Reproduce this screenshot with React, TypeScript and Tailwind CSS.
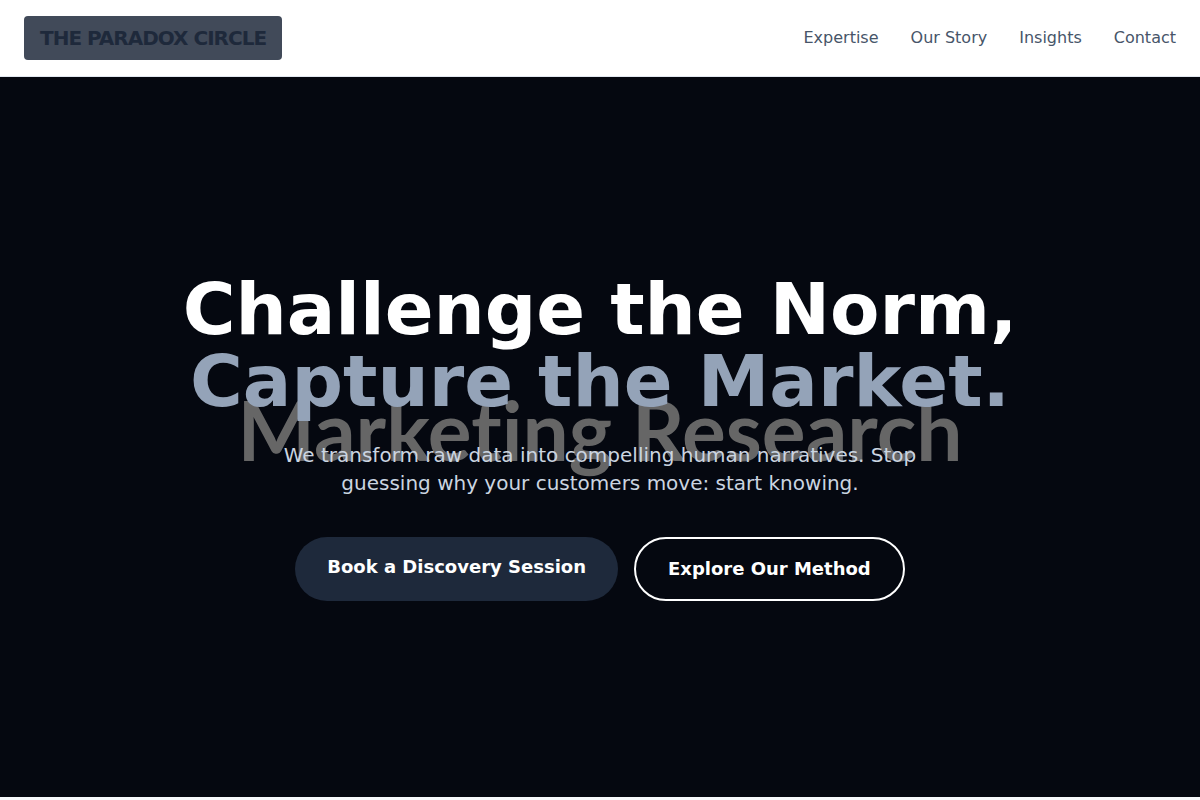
const links = [
  { label: "Expertise", href: "#expertise" },
  { label: "Our Story", href: "#story" },
  { label: "Insights", href: "#insights" },
  { label: "Contact", href: "#contact" },
];

function Header() {
  return (
    <header className="border-b border-slate-200 bg-white">
      <div className="flex items-center justify-between px-6 py-4">
        <a
          href="#home"
          className="rounded bg-[#414a59] px-4 py-2 text-xl font-bold tracking-tighter text-[#1e293b]"
        >
          THE PARADOX CIRCLE
        </a>
        <nav className="flex gap-8 text-base text-[#475569]">
          {links.map((link) => (
            <a key={link.href} href={link.href}>
              {link.label}
            </a>
          ))}
        </nav>
      </div>
    </header>
  );
}

function Hero() {
  return (
    <section
      id="home"
      className="relative flex min-h-[90vh] items-center justify-center overflow-hidden bg-[#050810] px-6"
    >
      <div
        aria-hidden="true"
        className="absolute inset-0 flex items-center justify-center pb-4 font-['Lato',sans-serif] text-[82px] leading-none font-bold whitespace-nowrap text-[#666666] [font-variant-ligatures:none]"
      >
        Marketing Research
      </div>
      <div className="relative max-w-4xl text-center">
        <h1 className="mb-6 text-7xl leading-none font-bold text-white">
          Challenge the Norm,
          <br />
          <span className="text-[#94a3b8]">Capture the Market.</span>
        </h1>
        <p className="mx-auto mb-10 max-w-2xl text-xl text-[#cbd5e1]">
          We transform raw data into compelling human narratives. Stop guessing why your customers
          move: start knowing.
        </p>
        <div className="flex justify-center gap-4 text-lg font-bold text-white">
          <a href="#contact" className="rounded-full bg-[#1e293b] px-8 py-4">
            Book a Discovery Session
          </a>
          <a href="#expertise" className="rounded-full border-2 border-white px-8 py-4">
            Explore Our Method
          </a>
        </div>
      </div>
    </section>
  );
}

export default function App() {
  return (
    <div className="min-h-screen bg-slate-50 font-['DejaVu_Sans',sans-serif]">
      <Header />
      <Hero />
    </div>
  );
}
